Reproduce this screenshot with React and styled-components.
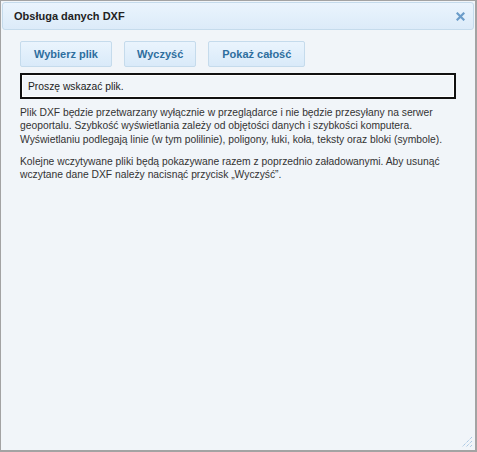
import React from "react";
import styled, { createGlobalStyle } from "styled-components";

const Global = createGlobalStyle`
  html, body { margin: 0; padding: 0; background: #fff; }
  body { font-family: "Liberation Sans", Arial, sans-serif; }
`;

const Dialog = styled.div`
  position: relative;
  box-sizing: border-box;
  width: 477px;
  height: 452px;
  border: 1px solid #a3a3a3;
  border-bottom-width: 2px;
  border-right-width: 2px;
  background: #f1f5f9;
  padding: 1px;
  display: flex;
  flex-direction: column;
`;

const Header = styled.div`
  box-sizing: border-box;
  height: 28px;
  display: flex;
  align-items: center;
  justify-content: space-between;
  padding: 0 8px 0 11px;
  border: 1px solid #c5dbec;
  border-radius: 3px;
  background: linear-gradient(#eaf4fd, #dcebf9);
`;

const Title = styled.span`
  font-size: 11px;
  font-weight: bold;
  color: #222;
`;

const Close = styled.span`
  display: flex;
  width: 9px;
  height: 9px;
`;

const Body = styled.div`
  flex: 1;
  padding: 11px 18px 0 18px;
  display: flex;
  flex-direction: column;
`;

const Toolbar = styled.div`
  display: flex;
  gap: 12px;
`;

const Button = styled.button`
  box-sizing: border-box;
  height: 26px;
  padding: 0 ${(p) => p.$pad || 13}px;
  border: 1px solid #c5dbec;
  border-radius: 2px;
  background: linear-gradient(#eaf4fd, #d9eaf9);
  color: #2e6e9e;
  font-family: "Liberation Sans", Arial, sans-serif;
  font-size: 11px;
  font-weight: bold;
  cursor: pointer;
`;

const FileBox = styled.div`
  box-sizing: border-box;
  margin-top: 6px;
  height: 26px;
  border: 2px solid #111;
  box-shadow: inset 0 0 0 1px #fff;
  background: #f1f5f9;
  display: flex;
  align-items: center;
  padding-left: 6px;
  font-size: 10.3px;
  color: #222;
`;

const Text = styled.p`
  margin: ${(p) => p.$mt}px 0 0 0;
  font-size: 10.3px;
  line-height: 13.3px;
  color: #333;
`;

const Grip = styled.svg`
  position: absolute;
  right: 2px;
  bottom: 2px;
`;

export default function App() {
  return (
    <>
      <Global />
      <Dialog>
        <Header>
          <Title>Obsługa danych DXF</Title>
          <Close>
            <svg width="9" height="9" viewBox="0 0 9 9">
              <path d="M1.5 1.5 L7.5 7.5 M7.5 1.5 L1.5 7.5" stroke="#6b9cc9" strokeWidth="2.2" strokeLinecap="square" />
            </svg>
          </Close>
        </Header>
        <Body>
          <Toolbar>
            <Button $pad={13}>Wybierz plik</Button>
            <Button $pad={12}>Wyczyść</Button>
            <Button $pad={13}>Pokaż całość</Button>
          </Toolbar>
          <FileBox>Proszę wskazać plik.</FileBox>
          <Text $mt={7}>
            Plik DXF będzie przetwarzany wyłącznie w przeglądarce i nie będzie przesyłany na serwer
            geoportalu. Szybkość wyświetlania zależy od objętości danych i szybkości komputera.
            Wyświetlaniu podlegają linie (w tym polilinie), poligony, łuki, koła, teksty oraz bloki (symbole).
          </Text>
          <Text $mt={9}>
            Kolejne wczytywane pliki będą pokazywane razem z poprzednio załadowanymi. Aby usunąć
            wczytane dane DXF należy nacisnąć przycisk „Wyczyść”.
          </Text>
        </Body>
        <Grip width="12" height="12" viewBox="0 0 12 12">
          <path d="M11 1 L1 11 M11 5 L5 11 M11 9 L9 11" stroke="#8fb6dc" strokeWidth="1" strokeDasharray="1 1" />
        </Grip>
      </Dialog>
    </>
  );
}
